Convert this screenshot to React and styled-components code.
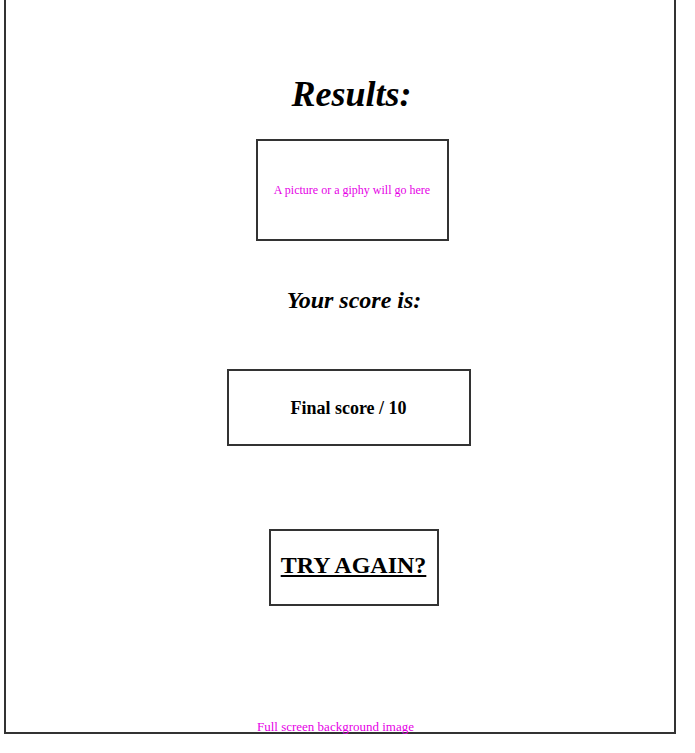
import React from "react";
import styled, { createGlobalStyle } from "styled-components";

const GlobalStyle = createGlobalStyle`
  html, body {
    margin: 0;
    padding: 0;
    background: #fff;
  }
  body {
    font-family: "Liberation Serif", "Times New Roman", serif;
    color: #000;
  }
`;

const Frame = styled.div`
  box-sizing: border-box;
  margin-left: 4px;
  width: 672px;
  height: 734px;
  border: 2px solid #333;
  border-top: none;
  display: flex;
  flex-direction: column;
`;

const Content = styled.div`
  display: flex;
  flex-direction: column;
  align-items: center;
  padding-left: 23px;
  padding-top: 74px;
`;

const Title = styled.h1`
  margin: 0;
  font-size: 36px;
  line-height: 40px;
  font-style: italic;
  font-weight: bold;
`;

const SubTitle = styled.h2`
  margin: 45px 0 0 5px;
  font-size: 24px;
  line-height: 28px;
  font-style: italic;
  font-weight: bold;
`;

const Box = styled.div`
  box-sizing: border-box;
  width: ${(p) => p.$w}px;
  height: ${(p) => p.$h}px;
  margin-top: ${(p) => p.$top}px;
  margin-left: ${(p) => p.$shift || 0}px;
  border: 2px solid #333;
  display: flex;
  align-items: center;
  justify-content: center;
`;

const Placeholder = styled.p`
  margin: 0;
  font-size: 12px;
  line-height: 14px;
  color: #e600e6;
`;

const Score = styled.h3`
  margin: 0;
  font-size: 18px;
  line-height: 22px;
  font-weight: bold;
`;

const TryAgain = styled.a`
  margin-top: -5px;
  font-size: 24px;
  line-height: 28px;
  font-weight: bold;
  color: #000;
  text-decoration: underline;
  cursor: pointer;
`;

const Footer = styled.p`
  margin: auto 0 -2px;
  padding-right: 9px;
  text-align: center;
  font-size: 13px;
  line-height: 15px;
  color: #e600e6;
`;

export default function App() {
  return (
    <>
      <GlobalStyle />
      <Frame>
        <Content>
          <Title>Results:</Title>
          <Box $w={193} $h={102} $top={25} $shift={1}>
            <Placeholder>A picture or a giphy will go here</Placeholder>
          </Box>
          <SubTitle>Your score is:</SubTitle>
          <Box $w={244} $h={77} $top={55} $shift={-6}>
            <Score>Final score / 10</Score>
          </Box>
          <Box $w={170} $h={77} $top={83} $shift={4}>
            <TryAgain>TRY AGAIN?</TryAgain>
          </Box>
        </Content>
        <Footer>Full screen background image</Footer>
      </Frame>
    </>
  );
}
